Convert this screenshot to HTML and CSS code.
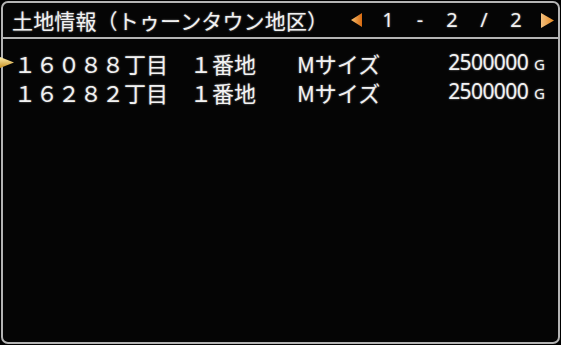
FILE: index.html
```html
<!DOCTYPE html>
<html lang="ja">
<head>
<meta charset="utf-8">
<link rel="stylesheet" href="styles.css">
</head>
<body>
<div class="frame">
  <div class="header">
    <div class="title">土地情報（トゥーンタウン地区）</div>
    <div class="pager">
      <svg class="arrow prev" width="11" height="14" viewBox="0 0 11 14"><defs><linearGradient id="gl" x1="0" y1="0" x2="1" y2="0"><stop offset="0" stop-color="#f7c070"/><stop offset="1" stop-color="#d86a10"/></linearGradient></defs><polygon points="0,7 11,0 11,14" fill="url(#gl)"/></svg>
      <span class="pg">1</span><span class="pg">-</span><span class="pg">2</span><span class="pg">/</span><span class="pg">2</span>
      <svg class="arrow next" width="13" height="15" viewBox="0 0 13 15"><defs><linearGradient id="gr" x1="0" y1="0" x2="1" y2="0"><stop offset="0" stop-color="#f2c080"/><stop offset="1" stop-color="#e88a20"/></linearGradient></defs><polygon points="0,0 13,7.5 0,15" fill="url(#gr)"/></svg>
    </div>
  </div>
  <div class="list">
    <div class="row selected">
      <svg class="cursor" width="14" height="13" viewBox="0 0 14 13"><defs><linearGradient id="gc" x1="0" y1="0" x2="0" y2="1"><stop offset="0" stop-color="#fff0b0"/><stop offset="1" stop-color="#c89020"/></linearGradient></defs><polygon points="0,1 14,6.5 0,12" fill="url(#gc)"/></svg>
      <span class="addr">１６０８８丁目　１番地</span><span class="size">Mサイズ</span><span class="price">2500000<span class="g">G</span></span>
    </div>
    <div class="row">
      <span class="addr">１６２８２丁目　１番地</span><span class="size">Mサイズ</span><span class="price">2500000<span class="g">G</span></span>
    </div>
  </div>
</div>
</body>
</html>
```
FILE: styles.css
```css
html, body {
  margin: 0;
  padding: 0;
  background: #000;
}
body {
  width: 561px;
  height: 345px;
  overflow: hidden;
  font-family: "Noto Sans CJK JP", "Noto Sans", sans-serif;
  color: #f2f2f2;
}
.frame {
  box-sizing: border-box;
  margin: 1px;
  width: 559px;
  height: 343px;
  border: 2px solid #b4b4b4;
  border-radius: 7px;
  background: #050505;
}
.header {
  box-sizing: border-box;
  height: 36px;
  border-bottom: 2px solid #b4b4b4;
  display: flex;
  align-items: center;
  padding-left: 9px;
}
.title {
  font-size: 21px;
  line-height: 1;
  letter-spacing: 0.15px;
  text-shadow: 0 0 2px rgba(255,255,255,0.55);
}
.pager {
  margin-left: auto;
  display: flex;
  align-items: center;
  padding-right: 4px;
}
.arrow {
  display: block;
}
.prev {
  margin-right: 10px;
}
.next {
  margin-left: 9px;
}
.pg {
  width: 32px;
  text-align: center;
  font-family: "Noto Sans", sans-serif;
  font-size: 20px;
  line-height: 1;
  text-shadow: 0 0 2px rgba(255,255,255,0.55);
}
.list {
  padding-top: 9px;
}
.row {
  position: relative;
  height: 29px;
  display: flex;
  align-items: center;
  padding-left: 11px;
  font-size: 22px;
  line-height: 22px;
  text-shadow: 0 0 2px rgba(255,255,255,0.55);
}
.cursor {
  position: absolute;
  left: -3px;
  top: 8px;
}
.addr {
  width: 283px;
}
.size {
  width: 140px;
}
.price {
  font-family: "Noto Sans", sans-serif;
  font-size: 21px;
  letter-spacing: -0.6px;
  width: 108px;
  text-align: right;
}
.g {
  font-size: 15px;
  margin-left: 6px;
  letter-spacing: 0;
}
```
